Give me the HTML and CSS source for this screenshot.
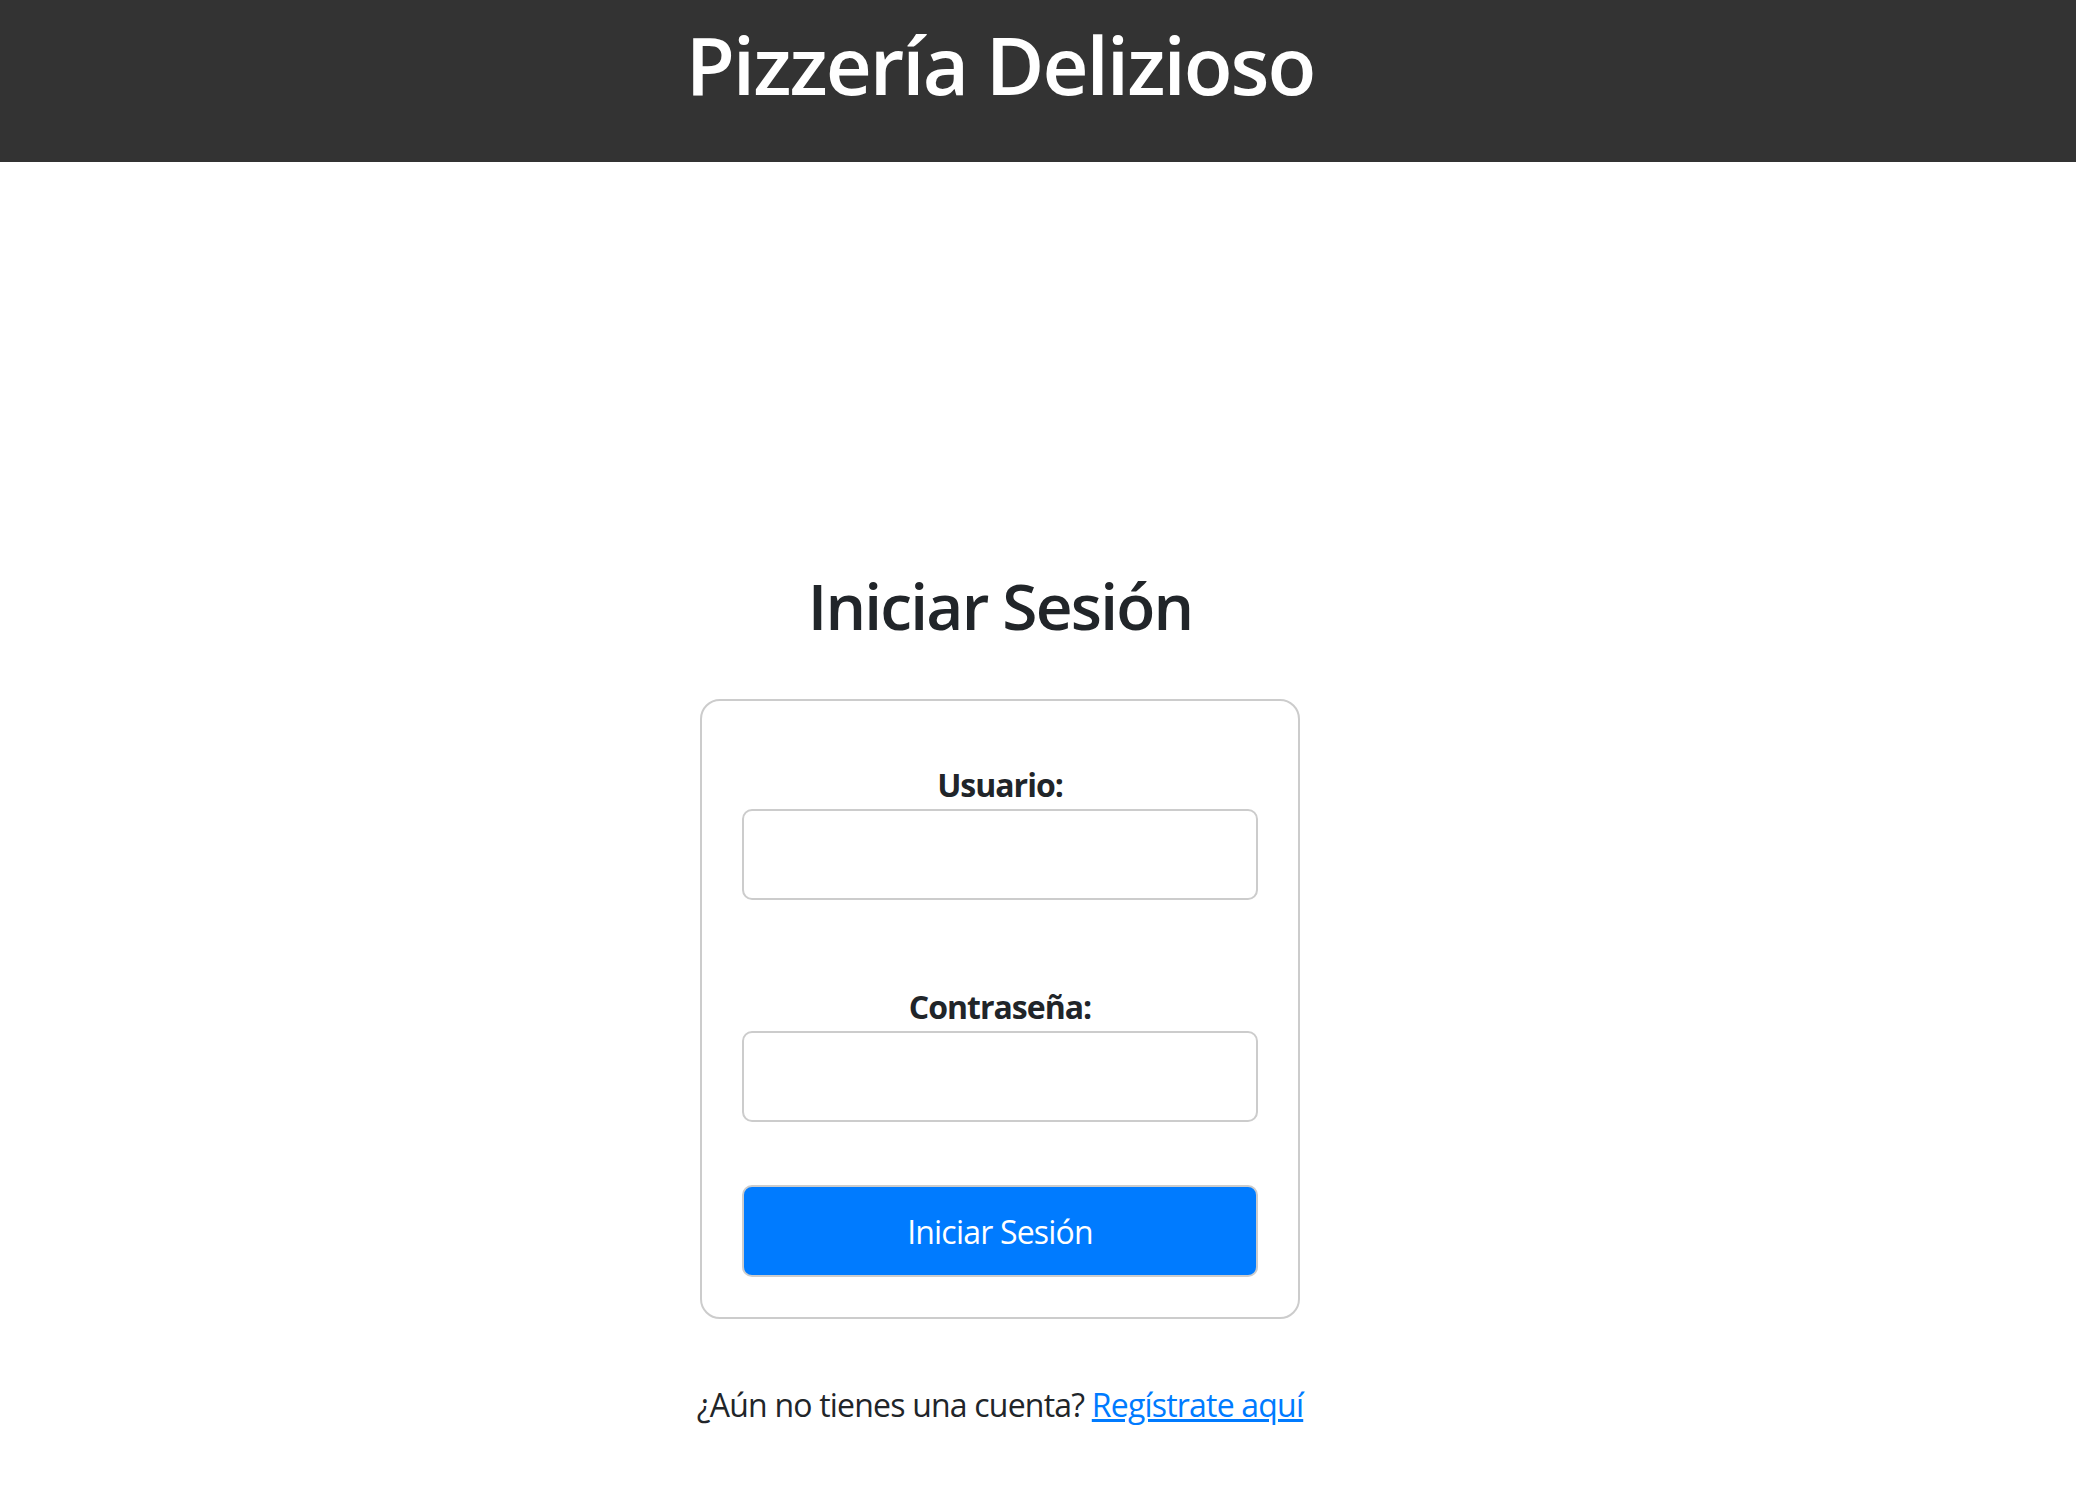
FILE: index.html
```html
<!DOCTYPE html>
<html lang="es">
<head>
<meta charset="utf-8">
<title>Pizzería Delizioso - Iniciar Sesión</title>
<link rel="stylesheet" href="styles.css">
</head>
<body>
<header class="site-header">
  <div class="wrap">
    <h1 class="brand">Pizzería Delizioso</h1>
  </div>
</header>
<main class="wrap page">
  <h2 class="title">Iniciar Sesión</h2>
  <form class="login-card">
    <div class="field">
      <label class="field-label" for="user">Usuario:</label>
      <input class="field-input" id="user" type="text">
    </div>
    <div class="field">
      <label class="field-label" for="pass">Contraseña:</label>
      <input class="field-input" id="pass" type="password">
    </div>
    <button class="submit" type="button">Iniciar Sesión</button>
  </form>
  <p class="signup">¿Aún no tienes una cuenta? <a class="signup-link" href="#">Regístrate aquí</a></p>
</main>
</body>
</html>
```

FILE: styles.css
```css
* { box-sizing: border-box; }

html, body {
  margin: 0;
  padding: 0;
  background: #ffffff;
}

body {
  font-family: "Open Sans", "Noto Sans", "Liberation Sans", sans-serif;
  color: #212529;
}

.wrap {
  width: 2000px;
}

.site-header {
  background: #333333;
  color: #ffffff;
  height: 162px;
  padding-top: 16px;
}

.brand {
  margin: 0;
  text-align: center;
  font-size: 80px;
  font-weight: 600;
  line-height: 96px;
  letter-spacing: -2px;
}

.page {
  padding-top: 405px;
  display: flex;
  flex-direction: column;
  align-items: center;
}

.title {
  margin: 0;
  font-size: 64px;
  font-weight: 600;
  line-height: 77px;
  text-align: center;
  letter-spacing: -1.8px;
}

.login-card {
  margin-top: 55px;
  width: 600px;
  border: 2px solid #cccccc;
  border-radius: 20px;
  padding: 0 40px 40px;
  display: flex;
  flex-direction: column;
  gap: 63px;
}

.field {
  padding-top: 60px;
  display: flex;
  flex-direction: column;
  align-items: center;
}

.field + .field {
  padding-top: 20px;
}

.field-label {
  font-size: 32px;
  font-weight: 700;
  line-height: 48px;
  letter-spacing: -1px;
}

.field-input {
  width: 100%;
  height: 91px;
  border: 2px solid #cccccc;
  border-radius: 10px;
  background: #ffffff;
  font-size: 32px;
  padding: 0 20px;
}

.submit {
  width: 100%;
  height: 92px;
  background: #007bff;
  color: #ffffff;
  border: 2px solid #cccccc;
  border-radius: 10px;
  font-family: inherit;
  font-size: 32px;
  font-weight: 400;
  letter-spacing: -0.8px;
}

.signup {
  margin: 62px 0 0;
  font-size: 32px;
  line-height: 48px;
  text-align: center;
  letter-spacing: -0.8px;
}

.signup-link {
  color: #007bff;
  text-decoration: underline;
}
```
